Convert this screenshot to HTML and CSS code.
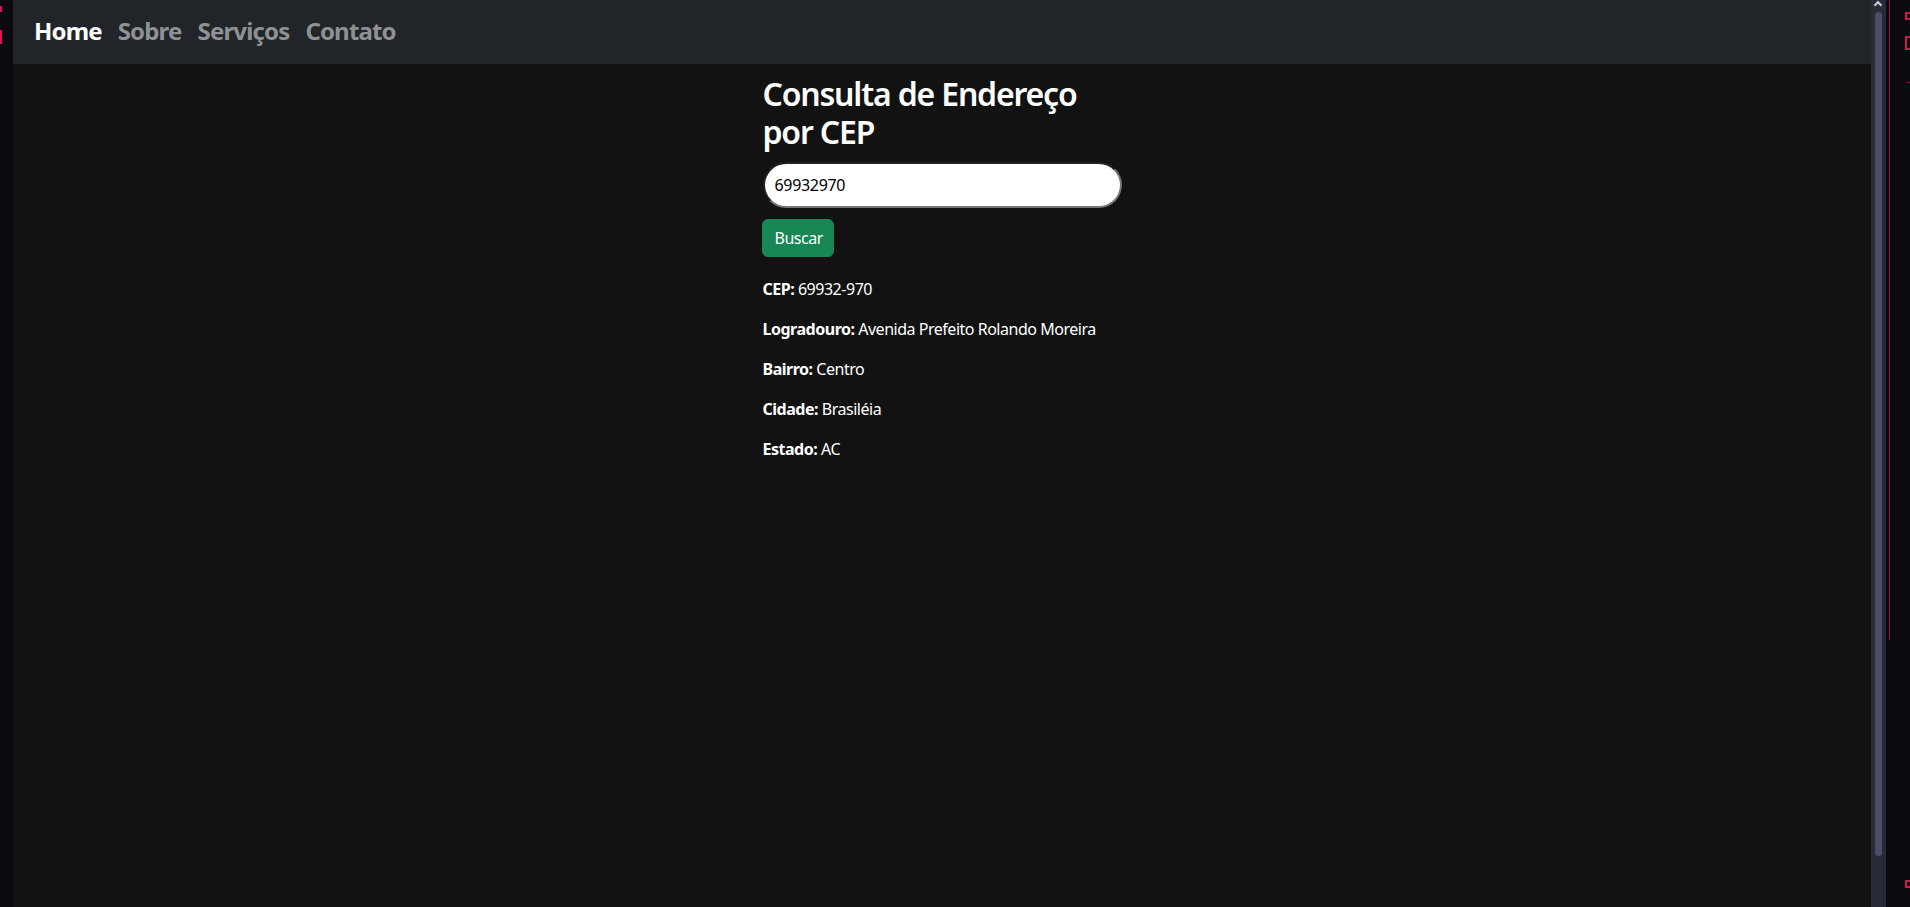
FILE: index.html
```html
<!DOCTYPE html>
<html lang="pt-BR">
<head>
<meta charset="utf-8">
<title>Consulta de Endereço por CEP</title>
<link rel="stylesheet" href="styles.css">
</head>
<body>
<div class="frame">
  <div class="edge-left">
    <span class="mark mark-l1"></span>
    <span class="mark mark-l2"></span>
  </div>
  <div class="page">
    <nav class="navbar">
      <a class="nav-link active" href="#">Home</a>
      <a class="nav-link" href="#">Sobre</a>
      <a class="nav-link" href="#">Serviços</a>
      <a class="nav-link" href="#">Contato</a>
    </nav>
    <main class="main">
      <div class="container">
        <h2 class="title">Consulta de Endereço por CEP</h2>
        <input class="cep-input" type="text" value="69932970">
        <button class="btn-buscar" type="button">Buscar</button>
        <div class="result">
          <p><strong>CEP:</strong> 69932-970</p>
          <p><strong>Logradouro:</strong> Avenida Prefeito Rolando Moreira</p>
          <p><strong>Bairro:</strong> Centro</p>
          <p><strong>Cidade:</strong> Brasiléia</p>
          <p><strong>Estado:</strong> AC</p>
        </div>
      </div>
    </main>
  </div>
  <div class="scrollbar">
    <span class="scroll-arrow"></span>
    <span class="scroll-thumb"></span>
  </div>
  <div class="edge-right">
    <span class="red-line"></span>
    <span class="mark mark-r1"></span>
    <span class="mark mark-r2"></span>
    <span class="mark mark-r3"></span>
    <span class="mark mark-r4"></span>
  </div>
</div>
</body>
</html>
```
FILE: styles.css
```css
* { box-sizing: border-box; }
html, body { margin: 0; height: 100%; }
body {
  background: #0b0a10;
  font-family: "Noto Sans", "Open Sans", sans-serif;
  letter-spacing: -0.02em;
  overflow: hidden;
}
.frame {
  display: flex;
  height: 907px;
}
.edge-left {
  position: relative;
  width: 13px;
  flex: none;
  background: #0b0a10;
}
.page {
  flex: 1;
  display: flex;
  flex-direction: column;
  background: #121212;
  min-width: 0;
}
.navbar {
  height: 64px;
  flex: none;
  background: #212529;
  display: flex;
  align-items: flex-start;
  gap: 16px;
  padding: 13px 0 0 21px;
}
.nav-link {
  font-size: 24px;
  line-height: 36px;
  font-weight: 700;
  letter-spacing: -0.035em;
  color: #8f9194;
  text-decoration: none;
}
.nav-link.active { color: #fff; }
.main {
  flex: 1;
  display: flex;
  justify-content: center;
  padding-top: 11px;
}
.container {
  width: 359px;
}
.title {
  margin: 0 0 10px;
  font-size: 32px;
  line-height: 38.4px;
  font-weight: 560;
  letter-spacing: -0.037em;
  color: #fff;
}
.cep-input {
  display: block;
  width: 359px;
  height: 46px;
  margin: 0;
  padding: 0 8px 0 10px;
  border: 2px inset #767676;
  border-radius: 23px;
  background: #fff;
  color: #000;
  font-family: inherit;
  font-size: 16px;
  letter-spacing: -0.02em;
  outline: none;
}
.btn-buscar {
  display: block;
  margin: 11px 0 0 -1px;
  height: 38px;
  padding: 0 10px 0 12px;
  border: 1px solid #198754;
  border-radius: 6px;
  background: #198754;
  color: #fff;
  font-family: inherit;
  font-size: 16px;
  line-height: 24px;
  letter-spacing: -0.03em;
}
.result {
  margin-top: 20px;
  color: #fff;
  letter-spacing: -0.03em;
}
.result p {
  margin: 0 0 16px;
  font-size: 16px;
  line-height: 24px;
}
.result strong { font-weight: 700; }
.scrollbar {
  position: relative;
  width: 15px;
  flex: none;
  background: #272a37;
  display: flex;
  justify-content: center;
  padding-top: 12px;
}
.scroll-thumb {
  display: block;
  width: 7px;
  height: 844px;
  border-radius: 4px;
  background: #4a4e68;
}
.scroll-arrow {
  position: absolute;
  top: 2px;
  left: 4px;
  width: 6px;
  height: 6px;
  border-left: 2px solid #c9cbd6;
  border-top: 2px solid #c9cbd6;
  transform: rotate(45deg);
}
.edge-right {
  position: relative;
  width: 24px;
  flex: none;
  background: #0b0a10;
}
.red-line {
  position: absolute;
  left: 3px;
  top: 0;
  width: 1px;
  height: 640px;
  background: #8a1630;
}
.mark {
  position: absolute;
  border: 2px solid #e0144c;
}
.mark-l1 { left: 0; top: 6px; width: 3px; height: 6px; border-width: 0 0 0 2px; }
.mark-l2 { left: 0; top: 30px; width: 3px; height: 14px; border-width: 0 0 0 2px; }
.mark-r1 { left: 19px; top: 12px; width: 10px; height: 8px; border-width: 2px 0 2px 2px; }
.mark-r2 { left: 19px; top: 36px; width: 10px; height: 14px; border-right: 0; }
.mark-r3 { left: 20px; top: 82px; width: 6px; height: 0; border-width: 1px 0 0 0; border-color: #6a1830; }
.mark-r4 { left: 19px; top: 880px; width: 10px; height: 8px; border-right: 0; }
```
